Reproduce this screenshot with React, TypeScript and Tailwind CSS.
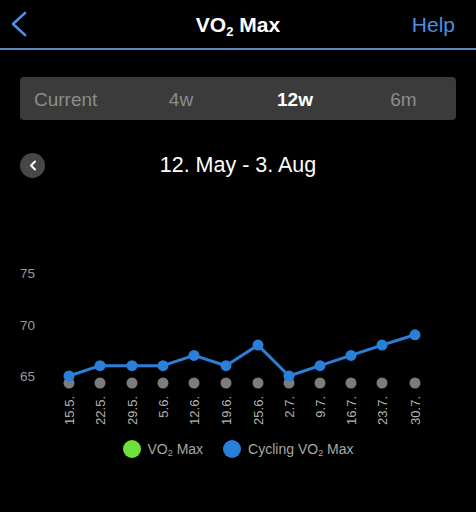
import React from 'react';

const weeks = ['15.5.', '22.5.', '29.5.', '5.6.', '12.6.', '19.6.', '25.6.', '2.7.', '9.7.', '16.7.', '23.7.', '30.7.'];
const values = [65, 66, 66, 66, 67, 66, 68, 65, 66, 67, 68, 69];
const xs = [69, 100, 132, 163, 194, 226, 258, 289, 320, 351, 382, 415];

// chart is drawn from page y=250, so 65 sits at 126
const yFor = (v: number) => 126 - (v - 65) * 10.3;

const Chart: React.FC = () => {
  const line = xs.map((x, i) => `${x},${yFor(values[i])}`).join(' ');
  return (
    <svg width={476} height={180} className="block" style={{ fontFamily: '"Liberation Sans", Arial, sans-serif' }}>
      {[75, 70, 65].map((v) => (
        <text key={v} x={20} y={yFor(v) + 5} fontSize={13.5} fill="#9a9a9a">
          {v}
        </text>
      ))}
      {xs.map((x) => (
        <circle key={`g${x}`} cx={x} cy={133} r={5.5} fill="#7c7c7c" />
      ))}
      <polyline points={line} fill="none" stroke="#2a7fd8" strokeWidth={3} strokeLinejoin="round" />
      {xs.map((x, i) => (
        <circle key={`b${x}`} cx={x} cy={yFor(values[i])} r={5.5} fill="#2a7fd8" />
      ))}
      {xs.map((x, i) => (
        <text
          key={`t${x}`}
          x={x + 4.5}
          y={146}
          fontSize={13}
          fill="#b4b4b4"
          textAnchor="end"
          transform={`rotate(-90 ${x + 4.5} 146)`}
        >
          {weeks[i]}
        </text>
      ))}
    </svg>
  );
};

const App: React.FC = () => {
  const tabs = ['Current', '4w', '12w', '6m'];
  return (
    <div className="w-[476px] h-[512px] bg-black overflow-hidden text-white font-['Liberation_Sans',Arial,sans-serif]">
      {/* Header */}
      <div className="h-[50px] grid grid-cols-[1fr_auto_1fr] items-center border-b-2 border-[#5d86c6]">
        <div className="pl-[11px] flex items-center">
          <svg width={16} height={26} viewBox="0 0 16 26">
            <polyline points="14,2 2,13 14,24" fill="none" stroke="#4a90e2" strokeWidth={2.6} strokeLinecap="round" strokeLinejoin="round" />
          </svg>
        </div>
        <div className="text-[21px] font-bold leading-none">
          VO<sub className="text-[13px] align-baseline relative top-[4px]">2</sub> Max
        </div>
        <div className="text-right pr-[21px] text-[21px] text-[#4a90e2] leading-none">Help</div>
      </div>

      {/* Range selector */}
      <div className="mx-[20px] mt-[27px] h-[43px] pt-[3px] rounded-[4px] bg-[#3b3b3b] grid grid-cols-[104px_114px_114px_103px] items-center text-[19px]">
        {tabs.map((t, i) => (
          <div
            key={t}
            className={`${i === 0 ? 'text-left pl-[14px]' : 'text-center'} ${t === '12w' ? 'text-white font-bold' : 'text-[#8c8c8c]'}`}
          >
            {t}
          </div>
        ))}
      </div>

      {/* Date range */}
      <div className="mt-[33px] px-[20px] h-[25px] grid grid-cols-[1fr_auto_1fr] items-center">
        <div>
          <div className="w-[25px] h-[25px] rounded-full bg-[#474747] flex items-center justify-center">
            <svg width={8} height={11} viewBox="0 0 8 11">
              <polyline points="6,1.5 2,5.5 6,9.5" fill="none" stroke="#ffffff" strokeWidth={2} strokeLinecap="round" strokeLinejoin="round" />
            </svg>
          </div>
        </div>
        <div className="text-[21.5px] leading-none">12. May - 3. Aug</div>
        <div />
      </div>

      {/* Chart */}
      <div className="mt-[72px]">
        <Chart />
      </div>

      {/* Legend */}
      <div className="mt-[10px] h-[18px] flex items-center justify-center gap-[20px] text-[14px] text-[#a6a6a6]">
        <div className="flex items-center gap-[7px]">
          <span className="w-[18px] h-[18px] rounded-full bg-[#6ee03b]" />
          <span>
            VO<sub className="text-[9px] align-baseline relative top-[2px]">2</sub> Max
          </span>
        </div>
        <div className="flex items-center gap-[7px]">
          <span className="w-[18px] h-[18px] rounded-full bg-[#2a7fd8]" />
          <span>
            Cycling VO<sub className="text-[9px] align-baseline relative top-[2px]">2</sub> Max
          </span>
        </div>
      </div>
    </div>
  );
};

export default App;
